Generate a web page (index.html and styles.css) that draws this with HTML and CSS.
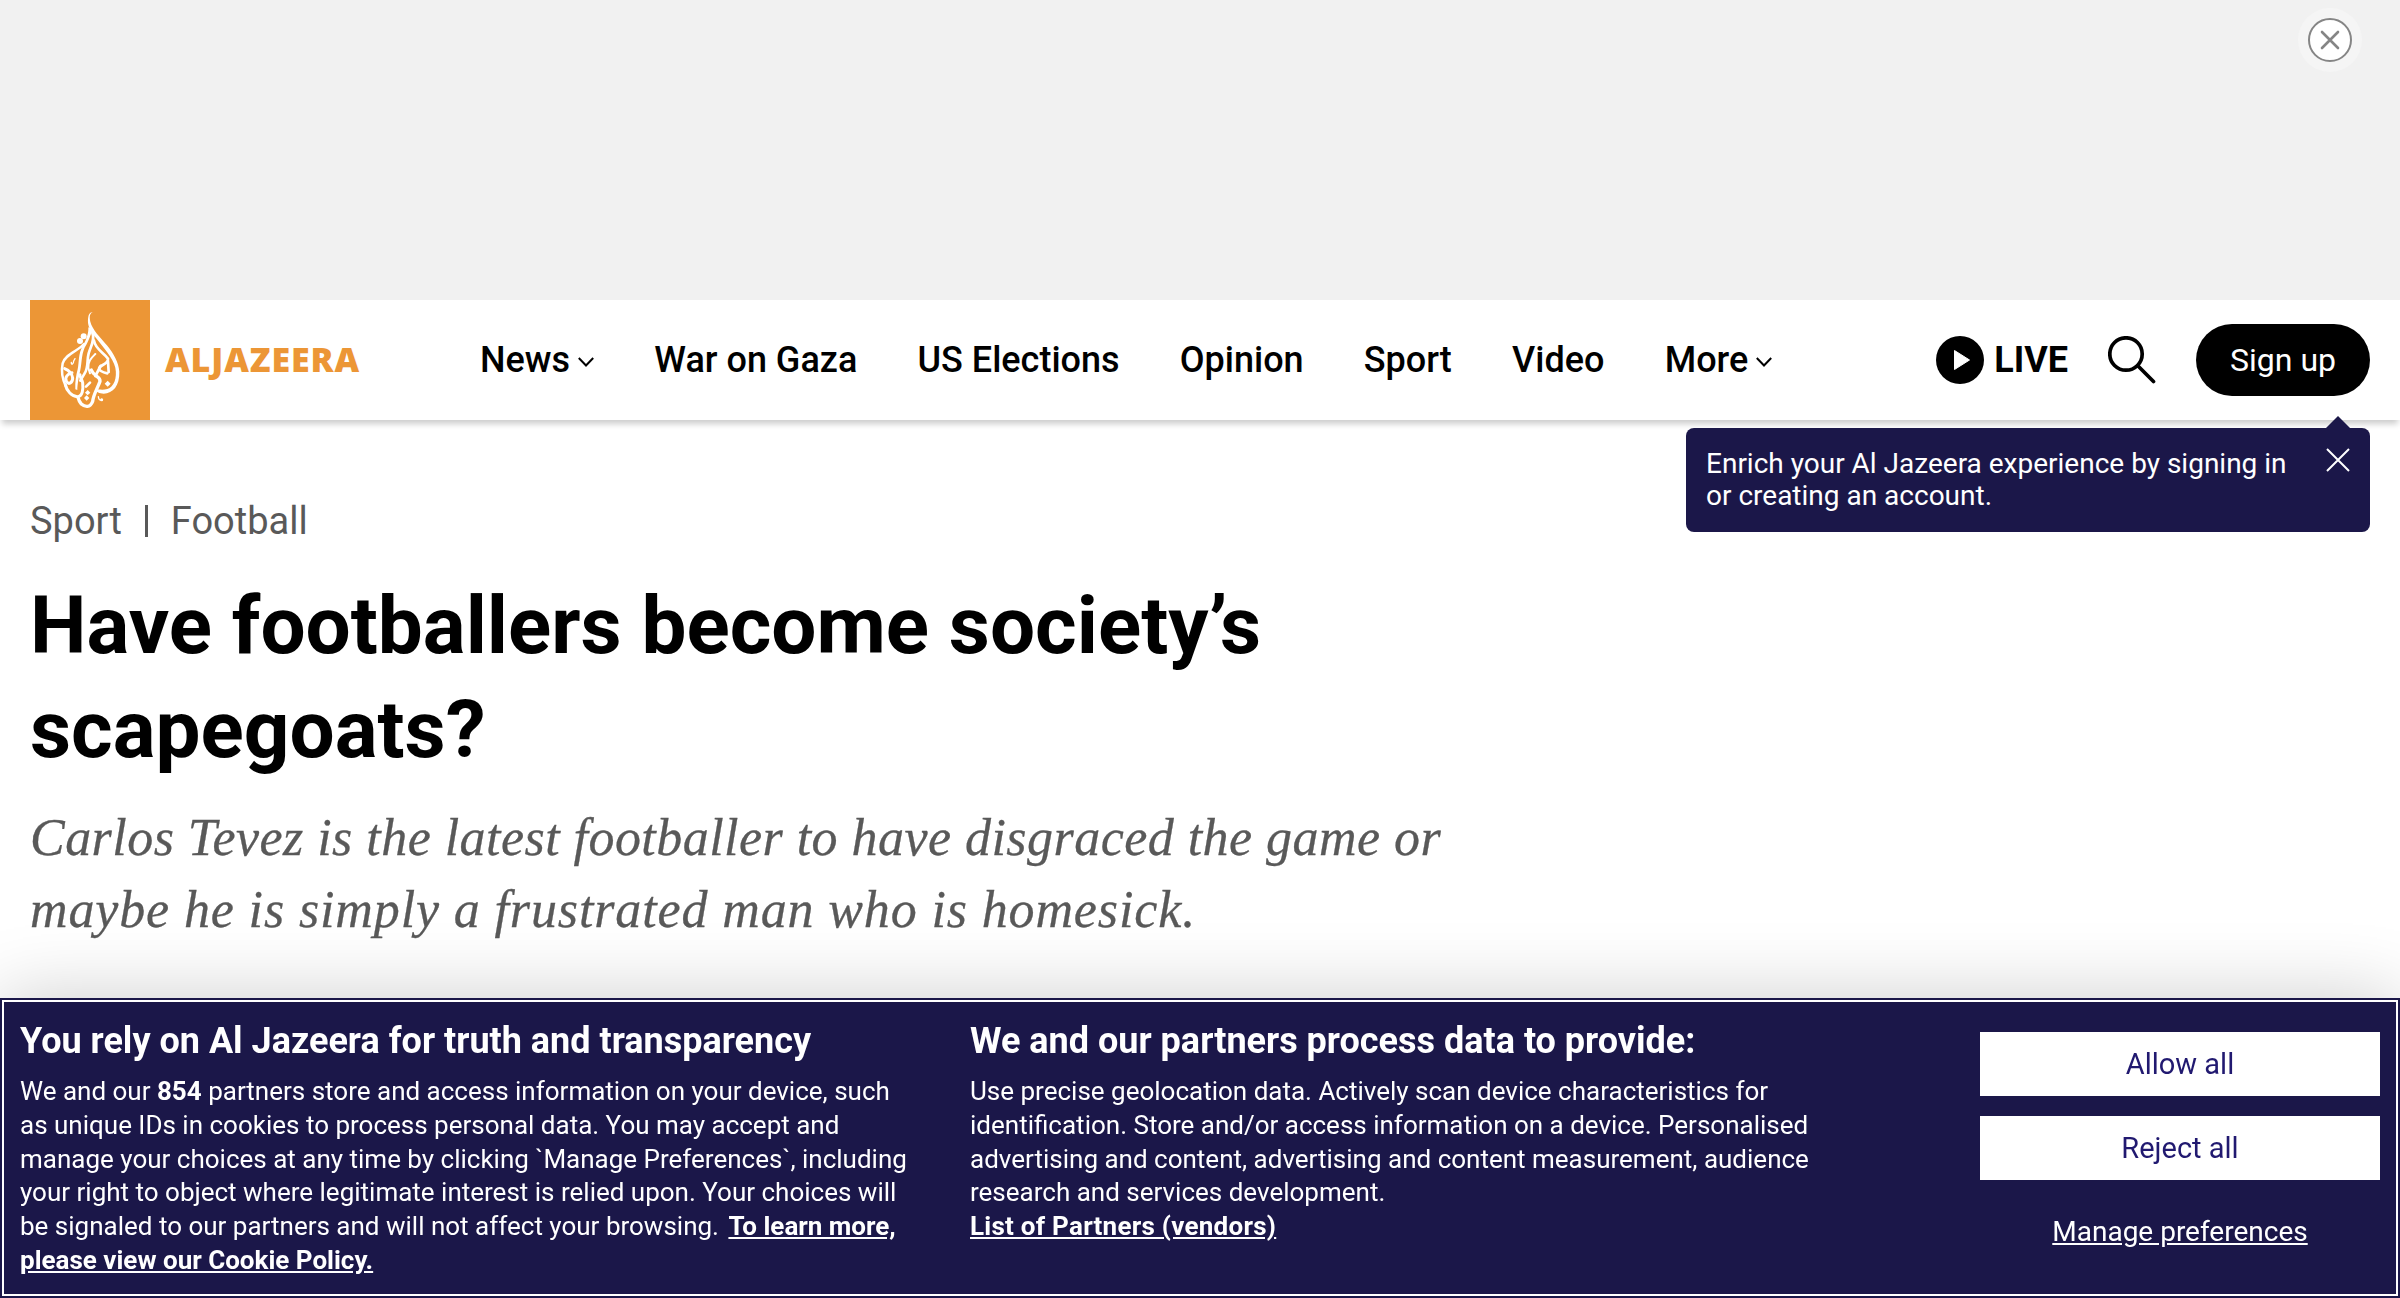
FILE: index.html
```html
<!DOCTYPE html>
<html lang="en">
<head>
<meta charset="utf-8">
<title>Have footballers become society’s scapegoats? | Al Jazeera</title>
<link rel="stylesheet" href="styles.css">
</head>
<body>
<div class="ad">
  <button class="ad-close" aria-label="Close">
    <svg viewBox="0 0 64 64"><circle cx="32" cy="32" r="32" fill="#f5f5f5"/><circle cx="32" cy="32" r="21" fill="#fff" stroke="#858585" stroke-width="2"/><path d="M24 24l16 16M40 24L24 40" stroke="#858585" stroke-width="2.6" stroke-linecap="round"/></svg>
  </button>
</div>
<header class="header">
  <a class="logo">
    <svg class="logo-mark" viewBox="30 30 360 360">
      <path fill="#ec9636" d="M30 30h360v360H30z"/>
      <g fill="#fff">
        <path d="M218 67C208 65 203 78 204 98C206 115 215 126 228 144C250 172 279 204 286 233C292 264 282 290 262 297C248 301 236 297 229 300C228 306 238 311 251 311C279 309 299 288 298 245C296 216 281 191 262 167C239 140 217 119 211 95C208 80 209 71 218 67Z"/>
        <circle cx="180" cy="153" r="9"/><circle cx="191" cy="139" r="9"/>
        <path d="M203 300l8 8-8 8-8-8zM200 316l8 8-8 8-8-8zM263 272l9 9-9 9-9-9z"/>
        <path d="M205 112L220 118C212 130 208 150 199 164C184 186 186 215 181 240C176 262 172 285 172 300L166 298C165 275 168 258 173 238C178 215 174 192 188 168C199 148 206 132 205 112Z"/>
      </g>
      <g fill="none" stroke="#fff" stroke-linecap="round" stroke-linejoin="round">
        <path stroke-width="7.500" d="M192 162C176 182 136 192 128 220C123 244 129 272 138 290"/>
        <path stroke-width="9" d="M134 236C144 240 156 250 158 264C158 278 146 286 139 274C134 262 142 252 156 248"/>
        <path stroke-width="9" d="M136 284C140 304 156 319 172 320C188 319 190 298 188 278C186 266 178 262 180 254"/>
        <path stroke-width="8" d="M217 128C226 150 212 168 206 190C200 212 206 232 194 250L181 272"/>
        <path stroke-width="6" d="M226 192C214 204 204 212 205 234L210 250"/>
        <path stroke-width="8" d="M222 152C226 178 250 186 264 206C266 218 252 222 240 230C230 240 250 248 262 250"/>
        <path stroke-width="10" d="M214 240C222 262 242 258 240 274C232 296 220 314 218 334C210 354 196 352 184 342C178 336 176 330 174 322"/>
        <path stroke-width="8" d="M210 278L198 290M264 214L266 246M242 228L226 258"/>
        <path stroke-width="4" d="M154 217C153 226 161 223 161 213L165 206M235 320C236 329 240 333 246 328"/>
      </g>
      <circle cx="245" cy="329" r="4.500" fill="#fff"/>
    </svg>
    <span class="logo-name">ALJAZEERA</span>
  </a>
  <nav class="nav">
    <a>News<svg class="chev" viewBox="0 0 16 10"><path d="M.8 1L8 8.500 15.200 1"/></svg></a>
    <a>War on Gaza</a>
    <a>US Elections</a>
    <a>Opinion</a>
    <a>Sport</a>
    <a>Video</a>
    <a>More<svg class="chev" viewBox="0 0 16 10"><path d="M.8 1L8 8.500 15.200 1"/></svg></a>
  </nav>
  <div class="actions">
    <a class="live"><svg viewBox="0 0 48 48"><circle cx="24" cy="24" r="24"/><path d="M18.500 14.500L33.500 24 18.500 33.500z" fill="#fff" stroke="#fff" stroke-linejoin="round"/></svg>LIVE</a>
    <svg class="search" viewBox="0 0 48 48"><circle cx="18" cy="18" r="16.200"/><path d="M29.800 29.800L45.500 45.500"/></svg>
    <div class="account">
      <button class="signup">Sign up</button>
      <div class="tip">
        <p>Enrich your Al Jazeera experience by signing in or creating an account.</p>
        <svg viewBox="0 0 24 24"><path d="M1 1l22 22M23 1L1 23"/></svg>
      </div>
    </div>
  </div>
</header>
<main class="article">
  <div class="crumbs"><a>Sport</a><span class="bar"></span><a>Football</a></div>
  <h1>Have footballers become society’s scapegoats?</h1>
  <p class="subhead"><span class="l1">Carlos Tevez is the latest footballer to have disgraced the game or</span> <span class="l2">maybe he is simply a frustrated man who is homesick.</span></p>
</main>
<section class="consent">
  <div class="policy">
    <h2>You rely on Al Jazeera for truth and transparency</h2>
    <p>We and our <b>854</b> partners store and access information on your device, such as unique IDs in cookies to process personal data. You may accept and manage your choices at any time by clicking `Manage Preferences`, including your right to object where legitimate interest is relied upon. Your choices will be signaled to our partners and will not affect your browsing. <a class="cookie">To learn more, please view our Cookie Policy.</a></p>
  </div>
  <div class="purposes">
    <h2>We and our partners process data to provide:</h2>
    <p>Use precise geolocation data. Actively scan device characteristics for identification. Store and/or access information on a device. Personalised advertising and content, advertising and content measurement, audience research and services development.</p>
    <a class="vendors">List of Partners (vendors)</a>
  </div>
  <div class="choices">
    <button>Allow all</button>
    <button>Reject all</button>
    <a>Manage preferences</a>
  </div>
</section>
</body>
</html>
```
FILE: styles.css
```css
* { box-sizing: border-box; }
body {
  margin: 0;
  height: 1298px;
  overflow: hidden;
  display: flex;
  flex-direction: column;
  background: #fff;
  color: #000;
  font-family: Roboto, "Liberation Sans", sans-serif;
}
h1, h2, p { margin: 0; }
button { border: 0; padding: 0; font: inherit; }
svg { display: block; flex: none; }

.ad {
  height: 300px;
  flex: none;
  background: #f1f1f1;
  display: flex;
  justify-content: flex-end;
  padding: 8px 38px;
}
.ad-close { width: 64px; height: 64px; background: none; }

.header {
  height: 120px;
  flex: none;
  display: flex;
  align-items: center;
  padding: 0 30px;
  box-shadow: 0 6px 6px -2px rgba(0, 0, 0, .2);
  position: relative;
}
.logo { display: flex; align-items: center; width: 450px; }
.logo-mark { width: 120px; height: 120px; }
.logo-name {
  margin: -3px 0 0 15px;
  font: 800 34px/1 "Open Sans", "Noto Sans", sans-serif;
  letter-spacing: .9px;
  color: #ec9636;
}
.nav { display: flex; gap: 60.200px; }
.nav a { display: flex; align-items: center; font-size: 36px; font-weight: 500; line-height: 42px; white-space: nowrap; }
.chev { width: 16px; height: 10px; margin: 4px 0 0 8px; fill: none; stroke: #000; stroke-width: 2; }
.actions { display: flex; align-items: center; margin-left: auto; }
.live { display: flex; align-items: center; gap: 10px; font-size: 36px; font-weight: 700; line-height: 42px; }
.live svg { width: 48px; height: 48px; }
.search { width: 48px; height: 48px; margin: 0 40px; fill: none; stroke: #000; stroke-width: 3.700; stroke-linecap: round; }
.account { position: relative; }
.signup {
  display: block;
  width: 174px;
  height: 72px;
  border-radius: 36px;
  background: #000;
  color: #fff;
  font-size: 32px;
}
.tip {
  position: absolute;
  top: 104px;
  right: 0;
  width: 684px;
  height: 104px;
  padding: 20px;
  border-radius: 8px;
  background: #1b1749;
  color: #fff;
  display: flex;
  justify-content: space-between;
}
.tip::before {
  content: "";
  position: absolute;
  top: -12px;
  right: 20px;
  border: solid transparent;
  border-width: 0 12px 12px;
  border-bottom-color: #1b1749;
}
.tip p { width: 590px; font-size: 28px; line-height: 32px; }
.tip svg { width: 24px; height: 24px; fill: none; stroke: #fff; stroke-width: 2; }

.article { padding: 77px 30px 0; width: 1500px; flex: none; }
.crumbs { display: flex; align-items: center; font-size: 38px; line-height: 48px; color: #595959; }
.bar { width: 3px; height: 32px; margin: 0 23px; background: #595959; }
h1 { margin-top: 29px; width: 1300px; font-size: 80px; font-weight: 700; line-height: 104px; }
.subhead {
  margin-top: 20px;
  font: italic 52px/72px Georgia, "Liberation Serif", serif;
  color: #595959;
  -webkit-text-stroke: .3px #595959;
}
.subhead span { display: block; white-space: nowrap; }
.l1 { letter-spacing: .46px; }
.l2 { letter-spacing: .87px; }

.consent {
  position: fixed;
  inset: auto 0 0;
  height: 300px;
  display: flex;
  padding: 25px 20px 0;
  background: #1b1749;
  color: #fff;
  outline: 2px solid #fff;
  outline-offset: -4px;
  box-shadow: 0 0 72px rgba(0, 0, 0, .2);
  font-size: 26px;
  line-height: 33.800px;
}
.consent h2 { font-size: 36px; font-weight: 700; line-height: 36px; margin-bottom: 16px; white-space: nowrap; }
.consent a { font-weight: 700; text-decoration: underline; }
.policy { width: 900px; margin-right: 50px; }
.policy .cookie { margin-left: 3px; }
.purposes { width: 850px; }
.purposes .vendors { letter-spacing: .26px; }
.choices { width: 400px; margin-left: auto; padding-top: 9px; display: flex; flex-direction: column; gap: 20px; }
.choices button { height: 64px; padding-top: 2px; background: #fff; color: #211970; font-size: 29px; }
.choices a { font-size: 28px; line-height: 64px; font-weight: 400; text-align: center; }
```
